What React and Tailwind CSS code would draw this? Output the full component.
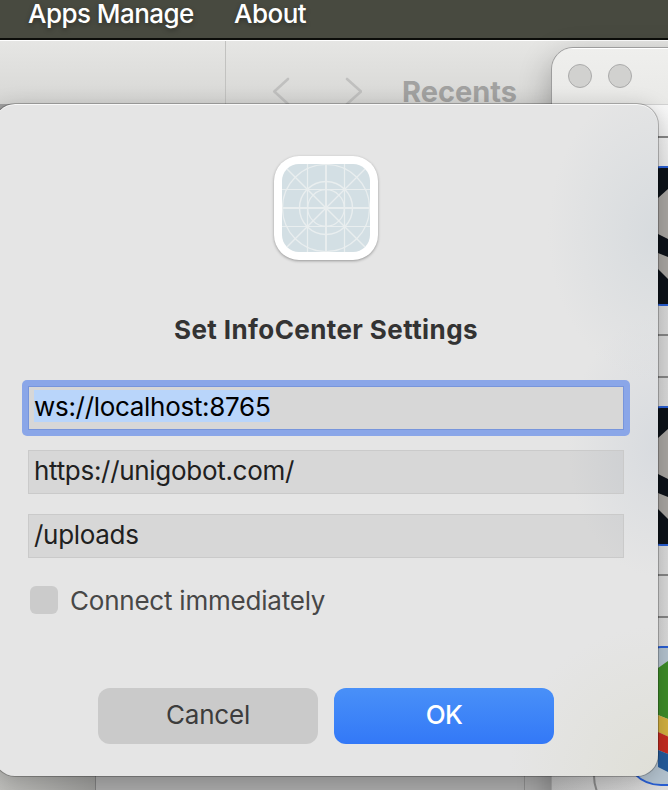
import React from "react";

function MenuBar() {
  return (
    <header className="relative h-10 border-b-2 border-[#0c0d0a] bg-[#484a40] text-[26px] leading-7 font-medium text-white [text-shadow:0_2px_5px_rgba(0,0,0,0.35)]">
      <nav className="flex gap-10 pl-7">
        <span className="w-[166px] whitespace-nowrap tracking-[-0.55px]">Apps Manage</span>
        <span className="whitespace-nowrap tracking-[-0.5px]">About</span>
      </nav>
    </header>
  );
}

function FinderWindow() {
  return (
    <section className="absolute inset-x-0 top-10 bottom-0 flex bg-[#a0a0a0]">
      <div className="flex w-full flex-col">
        <div className="flex h-16 border-t border-white bg-linear-to-b from-[#e6e6e4] to-[#d7d7d5]">
          <div className="w-[226px] shrink-0 border-r border-[#c2c2c0]" />
          <div className="flex items-start pt-[35px] pl-[46px]">
            <svg className="h-8 w-[90px]" viewBox="0 0 90 32" fill="none" stroke="#c0c0bf" strokeWidth="2.6" strokeLinecap="round" strokeLinejoin="round">
              <path d="M16 3 L2.3 15.5 L16 28" />
              <path d="M75 3 L89 15.5 L75 28" />
            </svg>
            <span className="ml-10 text-[29px] leading-8 font-bold tracking-[0px] text-[#a2a2a1]">Recents</span>
          </div>
        </div>
        <div className="flex flex-1 items-end">
          <div className="h-8 w-24 border-r border-[#7c7c7c] bg-linear-to-r from-[#bdbdba] to-[#9a9a98]" />
          <div className="h-8 w-[429px] border-r border-[#8c8c8c] bg-[#a8a8a8]" />
          <div className="h-8 flex-1 bg-[#a8a8a8]" />
        </div>
      </div>
    </section>
  );
}

function DarkGlyph() {
  return (
    <svg className="absolute top-0 left-[33px] h-[136px] w-5" viewBox="0 0 20 136">
      <path d="M0 30 L10 21 L20 14 V75 L10 71 L0 66 Z" fill="#a8a5a1" />
      <path d="M0 85 L20 93 V119 L10 111 L0 101 Z" fill="#a8a5a1" />
    </svg>
  );
}

function ColorGlyph() {
  return (
    <svg className="absolute top-0 left-[33px] h-[136px] w-5" viewBox="0 0 20 136">
      <path d="M0 20 L10 13 L20 7 V75 L0 67 Z" fill="#3d8c28" />
      <path d="M0 67 L20 75 V93 L0 84 Z" fill="#d3b03f" />
      <path d="M0 84 L20 93 V110 L0 102 Z" fill="#c52c20" />
      <path d="M0 102 L20 110 V128 L10 124 L0 119 Z" fill="#245b9b" />
    </svg>
  );
}

function Tile({ color }) {
  return (
    <div className="h-[200px] w-[200px] shrink-0 rounded-[40px] border-2 border-[#858585] pt-7 pl-7">
      <div className={`relative h-[140px] w-[140px] overflow-hidden rounded-[38px] border-2 border-[#285ed2] ${color ? "bg-[#b4c3cf]" : "bg-[#0d1219]"}`}>
        {color ? <ColorGlyph /> : <DarkGlyph />}
      </div>
    </div>
  );
}

function IconWindow() {
  return (
    <section className="absolute top-[47px] -right-[200px] bottom-[-60px] left-[551px] overflow-hidden rounded-[22px] border border-[#9d9d9d] bg-linear-to-r from-[#b4b4b4] to-[#dcdcdc] to-35% shadow-[0_12px_32px_rgba(0,0,0,0.3)]">
      <div className="flex h-[57px] gap-4 border-t border-b border-t-white border-b-[#d2d2d2] bg-linear-to-b from-[#efefed] to-[#e9e9e7] pt-[15px] pl-4">
        <i className="h-6 w-6 rounded-full border border-[#aaa] bg-[#d1d1cf]" />
        <i className="h-6 w-6 rounded-full border border-[#aaa] bg-[#d1d1cf]" />
      </div>
      <div className="flex flex-col gap-10 bg-linear-to-b from-[#f8f8f8] via-[#d7d7d7] via-20% to-transparent pt-[31px] pl-[41px]">
        <Tile />
        <Tile />
        <Tile color />
      </div>
    </section>
  );
}

function AppIcon() {
  return (
    <div className="flex h-[104px] w-[104px] items-center justify-center rounded-[25px] bg-white shadow-[0_1px_3px_rgba(0,0,0,0.35)]">
      <svg className="h-[88px] w-[88px] rounded-[17px] bg-[#d3dfe4]" viewBox="0 0 88 88" fill="none" stroke="#e9eeef" strokeWidth="1.2">
        <path d="M25.5 0V88M62.5 0V88M0 25.5H88M0 62.5H88" />
        <path d="M0 0L88 88M88 0L0 88" strokeWidth="1.4" />
        <path d="M44 0V88M0 44H88" strokeWidth="1.9" />
        <circle cx="44" cy="44" r="43.5" />
        <circle cx="44" cy="44" r="26.5" strokeWidth="1.4" />
        <circle cx="44" cy="44" r="18.3" />
      </svg>
    </div>
  );
}

function Field({ children, focused }) {
  return (
    <div className={focused ? "-m-1.5 rounded-[5px] bg-[#8aa6e8] p-1.5" : ""}>
      <div
        className={`flex h-11 w-[596px] border pt-[3px] pl-[5px] leading-[34px] tracking-[-0.3px] whitespace-nowrap ${
          focused ? "border-[#7795dc] bg-[#d7d7d7] text-black" : "border-[#cacaca] bg-black/[0.06] text-[#202020]"
        }`}
      >
        {children}
      </div>
    </div>
  );
}

function Dialog() {
  return (
    <main className="absolute top-[104px] left-[-6px] flex h-[672px] w-[664px] flex-col items-center rounded-[21px] bg-[#e5e5e5] bg-[radial-gradient(ellipse_110px_150px_at_100%_19%,#d7dbde,transparent),radial-gradient(ellipse_90px_130px_at_100%_51%,#d8dbdf,transparent),radial-gradient(ellipse_150px_150px_at_100%_100%,#dfdfd7,transparent)] pt-[52px] text-[26px] leading-8 shadow-[0_0_0_1px_rgba(0,0,0,0.24),inset_0_1px_0_rgba(255,255,255,0.75),0_4px_22px_rgba(0,0,0,0.22)]">
      <AppIcon />
      <h1 className="mt-[53px] h-8 leading-[34px] font-bold whitespace-nowrap tracking-[0.4px] text-[#333]">Set InfoCenter Settings</h1>
      <div className="mt-[41px] flex flex-col gap-5">
        <Field focused>
          <span className="h-8 w-[236px] bg-[#b9d5fa]">ws://localhost:8765</span>
        </Field>
        <Field><span>https://unigobot.com/</span></Field>
        <Field><span>/uploads</span></Field>
      </div>
      <label className="mt-[26px] flex h-8 w-[592px] items-center gap-3 text-[#474747]">
        <span className="h-7 w-7 rounded-[6px] bg-[#cbcbcb]" />
        <span className="pt-0.5 whitespace-nowrap tracking-[-0.22px]">Connect immediately</span>
      </label>
      <div className="mt-[72px] flex gap-4">
        <button className="h-14 w-[220px] rounded-xl bg-[#cacaca] pb-0.5 tracking-[-0.2px] text-[#3c3c3c]">Cancel</button>
        <button className="h-14 w-[220px] rounded-xl bg-linear-to-b from-[#4990f8] to-[#3378f7] pb-0.5 font-medium tracking-[-0.6px] text-white">OK</button>
      </div>
    </main>
  );
}

export default function App() {
  return (
    <div className="relative h-[790px] w-[668px] overflow-hidden bg-[#d0d0ce] font-['Inter','Liberation_Sans',sans-serif]">
      <MenuBar />
      <FinderWindow />
      <IconWindow />
      <Dialog />
    </div>
  );
}
